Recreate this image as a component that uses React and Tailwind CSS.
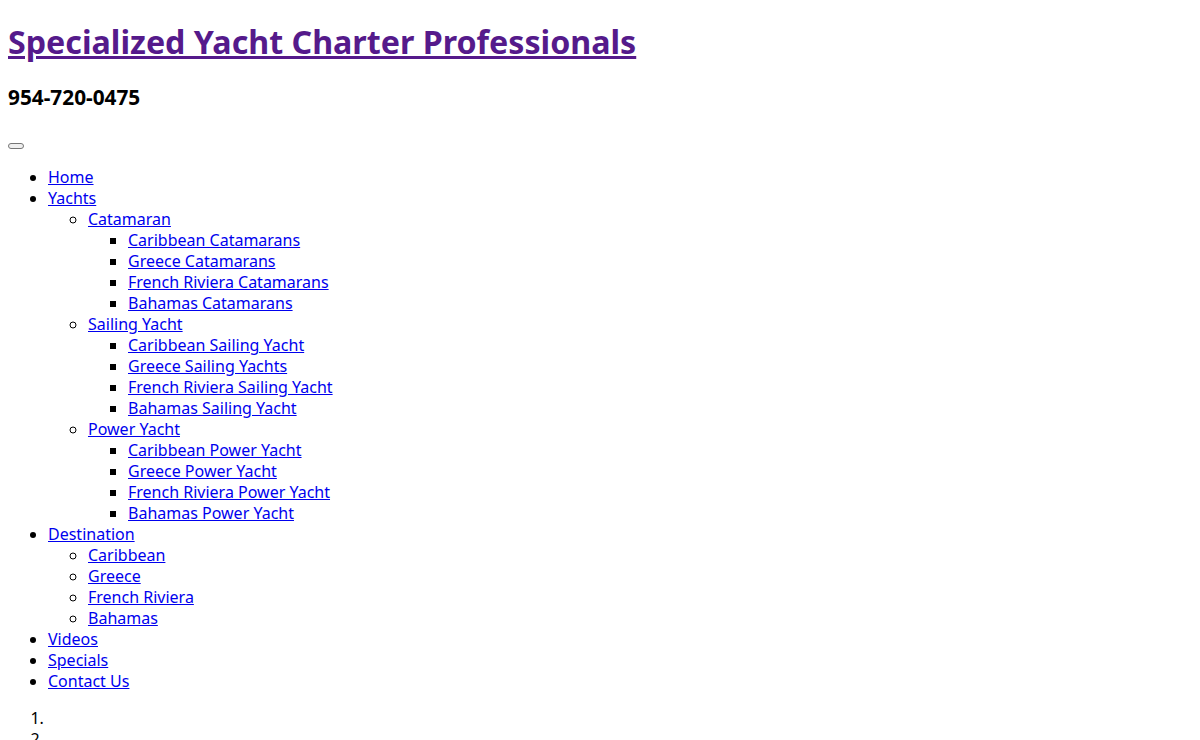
const nav = [
  { label: "Home" },
  {
    label: "Yachts",
    children: [
      {
        label: "Catamaran",
        children: [
          "Caribbean Catamarans",
          "Greece Catamarans",
          "French Riviera Catamarans",
          "Bahamas Catamarans",
        ],
      },
      {
        label: "Sailing Yacht",
        children: [
          "Caribbean Sailing Yacht",
          "Greece Sailing Yachts",
          "French Riviera Sailing Yacht",
          "Bahamas Sailing Yacht",
        ],
      },
      {
        label: "Power Yacht",
        children: [
          "Caribbean Power Yacht",
          "Greece Power Yacht",
          "French Riviera Power Yacht",
          "Bahamas Power Yacht",
        ],
      },
    ],
  },
  {
    label: "Destination",
    children: [
      { label: "Caribbean" },
      { label: "Greece" },
      { label: "French Riviera" },
      { label: "Bahamas" },
    ],
  },
  { label: "Videos" },
  { label: "Specials" },
  { label: "Contact Us" },
];

function Link({ children }) {
  return (
    <a href="#" className="text-[#0000ee] underline">
      {children}
    </a>
  );
}

export default function App() {
  return (
    <div
      className="p-2 text-black bg-white text-[16px] leading-[21px] min-h-screen"
      style={{ fontFamily: '"Noto Sans", sans-serif' }}
    >
      <h1 className="text-[32.2px] font-bold leading-[42.5px] mt-[13.44px] mb-[21.44px]">
        <a href="#" className="text-[#551a8b] underline">
          Specialized Yacht Charter Professionals
        </a>
      </h1>

      <h3 className="text-[20.8px] font-bold leading-[25px] mb-[18.72px]">
        954-720-0475
      </h3>

      <div className="h-[21px] pt-[14px]">
        <span className="block w-[16px] h-[6px] border border-[#767676] bg-[#efefef] rounded-[3px]"></span>
      </div>

      <ul className="list-disc pl-10 mt-[17px] mb-4">
        {nav.map((item) => (
          <li key={item.label}>
            <Link>{item.label}</Link>
            {item.children && (
              <ul className="list-[circle] pl-10">
                {item.children.map((sub) => (
                  <li key={sub.label}>
                    <Link>{sub.label}</Link>
                    {sub.children && (
                      <ul className="list-[square] pl-10">
                        {sub.children.map((leaf) => (
                          <li key={leaf}>
                            <Link>{leaf}</Link>
                          </li>
                        ))}
                      </ul>
                    )}
                  </li>
                ))}
              </ul>
            )}
          </li>
        ))}
      </ul>

      <ol className="list-decimal pl-10 my-4">
        <li className="h-[21px]"></li>
        <li className="h-[21px]"></li>
        <li className="h-[21px]"></li>
      </ol>
    </div>
  );
}
